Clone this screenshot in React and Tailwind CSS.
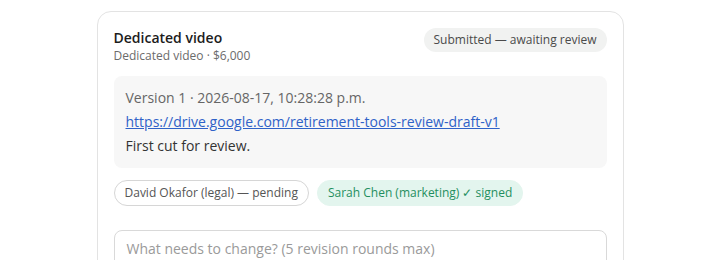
export default function App() {
  return (
    <div className="min-h-[260px] bg-white pt-[11px]" style={{ fontFamily: '"Open Sans", "Noto Sans", sans-serif' }}>
      <div className="mx-auto w-[527px] rounded-[14px] border border-[#e3e3e3] bg-white p-4">
        <div className="flex items-start justify-between">
          <div>
            <div className="text-[14px] leading-5 font-semibold text-[#1c1c1c]">Dedicated video</div>
            <div className="text-[12px] leading-4 text-[#6b6b6b]">Dedicated video · $6,000</div>
          </div>
          <span className="rounded-full bg-[#f1f2f1] px-2.5 py-1 text-[12px] leading-4 text-[#4a4a4a]">Submitted — awaiting review</span>
        </div>
        <div className="mt-3 flex flex-col gap-1 rounded-lg bg-[#f7f7f7] p-3 text-[14px] leading-5">
          <div className="text-[#666]">Version 1 · 2026-08-17, 10:28:28 p.m.</div>
          <a href="#" className="text-[#2f62c8] underline">https://drive.google.com/retirement-tools-review-draft-v1</a>
          <div className="text-[#333]">First cut for review.</div>
        </div>
        <div className="mt-3 flex gap-2">
          <span className="rounded-full border border-[#d6d6d6] px-2.5 py-1 text-[12px] leading-4 text-[#555]">David Okafor (legal) — pending</span>
          <span className="rounded-full border border-[#e3f5ee] bg-[#e3f5ee] px-2.5 py-1 text-[12px] leading-4 text-[#1f8f5f]">Sarah Chen (marketing) ✓ signed</span>
        </div>
        <textarea
          className="mt-6 block h-[70px] w-full resize-none rounded-lg border border-[#d9d9d9] px-3 py-2 text-[14px] leading-5 outline-none placeholder:text-[#9a9a9a]"
          placeholder="What needs to change? (5 revision rounds max)"
        />
      </div>
    </div>
  );
}
